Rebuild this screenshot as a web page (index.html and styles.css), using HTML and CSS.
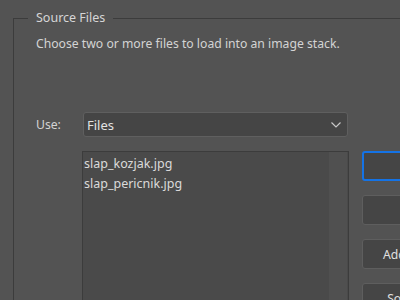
FILE: index.html
```html
<!DOCTYPE html>
<html>
<head>
<meta charset="utf-8">
<link rel="stylesheet" href="styles.css">
</head>
<body>
<fieldset class="group">
  <legend class="group-title">Source Files</legend>
  <div class="group-body">
    <p class="hint">Choose two or more files to load into an image stack.</p>
    <div class="use-row">
      <span class="use-label">Use:</span>
      <div class="select">
        <span class="select-value">Files</span>
        <svg class="chevron" width="10" height="6" viewBox="0 0 10 6"><polyline points="0.5,0.5 5,5 9.5,0.5" fill="none" stroke="#c8c8c8" stroke-width="1.2"/></svg>
      </div>
    </div>
    <div class="files-row">
      <div class="file-list">
        <ul class="files">
          <li>slap_kozjak.jpg</li>
          <li>slap_pericnik.jpg</li>
        </ul>
        <div class="scroll-track"></div>
      </div>
      <div class="buttons">
        <button class="btn btn-focus">Browse...</button>
        <button class="btn">Remove</button>
        <button class="btn">Add Open Files</button>
        <button class="btn">Sort by Name</button>
      </div>
    </div>
  </div>
</fieldset>
</body>
</html>
```
FILE: styles.css
```css
html, body {
  margin: 0;
  padding: 0;
  background: #535353;
  overflow: hidden;
  width: 400px;
  height: 300px;
}
body {
  font-family: "Noto Sans", "Open Sans", sans-serif;
  font-size: 12.2px;
  color: #d4d4d4;
}
.group {
  margin: 10px 0 0 13px;
  padding: 0 0 0 14px;
  border: 1px solid #3c3c3c;
  width: 600px;
  height: 400px;
  box-sizing: border-box;
}
.group-title {
  padding: 0 8px;
  line-height: 16px;
  font-size: 12.5px;
  color: #d6d6d6;
}
.group-body {
  padding-left: 8px;
}
.hint {
  margin: 10px 0 0 0;
  line-height: 16px;
  font-size: 12.2px;
}
.use-row {
  display: flex;
  align-items: center;
  margin-top: 60px;
}
.use-label {
  width: 47px;
  font-size: 12.2px;
}
.select {
  width: 265px;
  height: 25px;
  box-sizing: border-box;
  background: #454545;
  border: 1px solid #5f5f5f;
  border-radius: 3px;
  display: flex;
  align-items: center;
  justify-content: space-between;
  padding: 0 6px 0 3px;
}
.select-value {
  font-size: 13px;
  color: #e2e2e2;
}
.chevron {
  display: block;
  margin-top: 1px;
}
.files-row {
  display: flex;
  margin-top: 14px;
  margin-left: 46px;
}
.file-list {
  width: 267px;
  height: 200px;
  box-sizing: border-box;
  border: 1px solid #3c3c3c;
  background: #4a4a4a;
  display: flex;
}
.files {
  list-style: none;
  margin: 0;
  padding: 2px 0 0 1px;
  flex: 1;
}
.files li {
  line-height: 20px;
  font-size: 12.5px;
  color: #dadada;
}
.scroll-track {
  width: 18px;
  background: #505050;
  margin-right: 1px;
}
.buttons {
  display: flex;
  flex-direction: column;
  gap: 14px;
  margin-left: 13px;
}
.btn {
  width: 128px;
  height: 30px;
  box-sizing: border-box;
  background: #454545;
  border: 1px solid #5e5e5e;
  border-radius: 3px;
  font-family: "Noto Sans", "Open Sans", sans-serif;
  font-size: 12.2px;
  color: #e0e0e0;
  padding: 0;
}
.btn-focus {
  border: 2px solid #1473e6;
}
```
